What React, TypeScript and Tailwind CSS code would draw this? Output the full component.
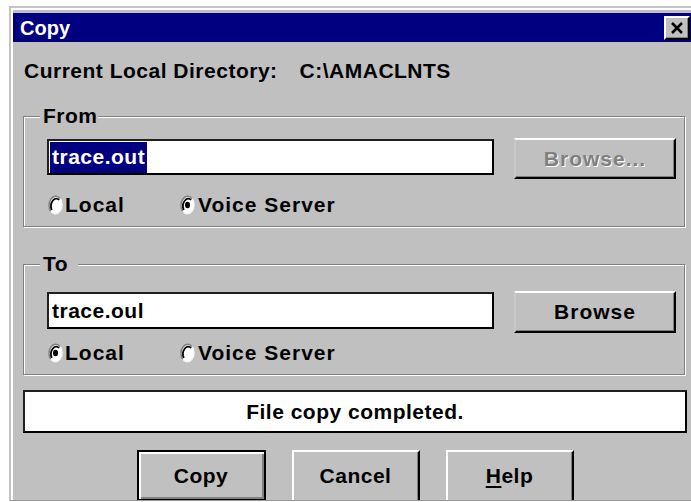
import React from 'react';

const face = 'bg-[#c0c0c0]';

function Radio({ checked }: { checked: boolean }) {
  return (
    <svg width="15" height="20" viewBox="0 0 12 16" className="block shrink-0">
      <ellipse cx="6" cy="8" rx="5.4" ry="7.2" fill="#fff" />
      <path d="M2.2 13.1 A5.4 7.2 0 0 1 9.8 2.9" stroke="#808080" strokeWidth="1.2" fill="none" />
      <path d="M3 12 A4.2 6 0 0 1 9 4" stroke="#000" strokeWidth="1.4" fill="none" />
      <path d="M9.8 2.9 A5.4 7.2 0 0 1 2.2 13.1" stroke="#f4f4f4" strokeWidth="1.2" fill="none" />
      {checked && <ellipse cx="6" cy="8" rx="2" ry="2.6" fill="#000" />}
    </svg>
  );
}

function RadioRow({ local }: { local: boolean }) {
  return (
    <div className="flex h-[24px] items-center pl-[24px] tracking-[1px]">
      <div className="flex w-[132px] items-center gap-[2px]">
        <Radio checked={local} />
        <span>Local</span>
      </div>
      <div className="flex items-center gap-[3px]">
        <Radio checked={!local} />
        <span>Voice Server</span>
      </div>
    </div>
  );
}

function GroupBox({ label, labelWidth, children }: { label: string; labelWidth: string; children: React.ReactNode }) {
  return (
    <div className="relative w-[662px] border border-[#808080] shadow-[inset_1px_1px_0_#fff,1px_1px_0_#fff]">
      <span className={`absolute left-[16px] top-[-13px] h-[24px] ${labelWidth} ${face} px-[3px] leading-[24px]`}>
        {label}
      </span>
      {children}
    </div>
  );
}

function BrowseButton({ disabled, label, h }: { disabled?: boolean; label: string; h: string }) {
  return (
    <button
      type="button"
      className={`${h} w-[162px] border-2 border-t-white border-l-[#c8c8c8] border-r-black border-b-black ${face} shadow-[inset_-1px_-1px_0_#808080] tracking-[1px] ${
        disabled ? 'text-[#808080] [text-shadow:1px_1px_0_#fff]' : 'text-black'
      }`}
    >
      {label}
    </button>
  );
}

function DialogButton({ children, isDefault }: { children: React.ReactNode; isDefault?: boolean }) {
  if (isDefault) {
    return (
      <button
        type="button"
        className={`h-[51px] w-[129px] border-2 border-black ${face} shadow-[inset_2px_2px_0_#fff,inset_-2px_-2px_0_#808080]`}
      >
        {children}
      </button>
    );
  }
  return (
    <button
      type="button"
      className={`h-[56px] w-[128px] border-2 border-t-white border-l-white border-r-black border-b-black ${face} pb-[5px] shadow-[inset_-1px_-1px_0_#808080]`}
    >
      {children}
    </button>
  );
}

export default function App() {
  return (
    <div className="h-[502px] w-[691px] overflow-hidden bg-white pl-[9px] pt-[6px] font-['Liberation_Sans',Arial,sans-serif] text-[21px] font-bold tracking-[0.5px] text-black">
      <div className="h-[495px] w-[700px] border-l-2 border-t-2 border-b border-[#c4c4c4] border-b-[#9a9a9a] bg-[#c0c0c0]">
        <div className="h-full overflow-hidden border-l-2 border-t-2 border-white pt-[3px]">
          {/* title bar */}
          <div className="flex h-[29px] w-[680px] items-center justify-between bg-[#000080] pl-[7px] pr-[3px]">
            <span className="text-[20px] tracking-normal text-white">Copy</span>
            <button
              type="button"
              className="flex h-[24px] w-[26px] items-center justify-center border-2 border-t-white border-l-white border-r-black border-b-black bg-[#c0c0c0] shadow-[inset_-1px_-1px_0_#808080]"
            >
              <svg width="14" height="14" viewBox="0 0 14 14">
                <path d="M2 2 L12 12 M12 2 L2 12" stroke="#000" strokeWidth="2.6" />
              </svg>
            </button>
          </div>

          <div className="mt-[17px] flex h-[24px] items-center pl-[11px] leading-[24px]">
            <span>Current Local Directory:</span>
            <span className="ml-[22px]">C:\AMACLNTS</span>
          </div>

          <div className="ml-[10px] mt-[33px]">
            <GroupBox label="From" labelWidth="w-[58px]">
              <div className="flex items-start pl-[23px] pt-[21px]">
                <div className="mt-[1px] flex h-[36px] w-[447px] items-center border-2 border-[#202020] border-r-black border-b-black bg-white pl-[1px]">
                  <span className="flex h-[31px] items-center bg-[#000080] px-[2px] text-white">trace.out</span>
                </div>
                <div className="ml-[20px]">
                  <BrowseButton disabled label="Browse..." h="h-[41px]" />
                </div>
              </div>
              <div className="pb-[9px] pt-[14px]">
                <RadioRow local={false} />
              </div>
            </GroupBox>

            <div className="mt-[37px]">
              <GroupBox label="To" labelWidth="w-[38px]">
                <div className="flex items-start pl-[23px] pt-[26px]">
                  <div className="mt-[1px] flex h-[37px] w-[447px] items-center border-2 border-[#202020] border-r-black border-b-black bg-white pl-[3px]">
                    trace.oul
                  </div>
                  <div className="ml-[20px]">
                    <BrowseButton label="Browse" h="h-[42px]" />
                  </div>
                </div>
                <div className="pb-[9px] pt-[8px]">
                  <RadioRow local={true} />
                </div>
              </GroupBox>
            </div>

            <div className="mt-[15px] flex h-[43px] w-[664px] items-center justify-center border-2 border-[#202020] border-r-black border-b-black bg-white">
              File copy completed.
            </div>

            <div className="mt-[17px] flex w-[664px] items-start justify-center gap-[26px]">
              <DialogButton isDefault>Copy</DialogButton>
              <DialogButton>Cancel</DialogButton>
              <DialogButton>
                <span className="underline decoration-2 underline-offset-[3px]">H</span>elp
              </DialogButton>
            </div>
          </div>
        </div>
      </div>
    </div>
  );
}
